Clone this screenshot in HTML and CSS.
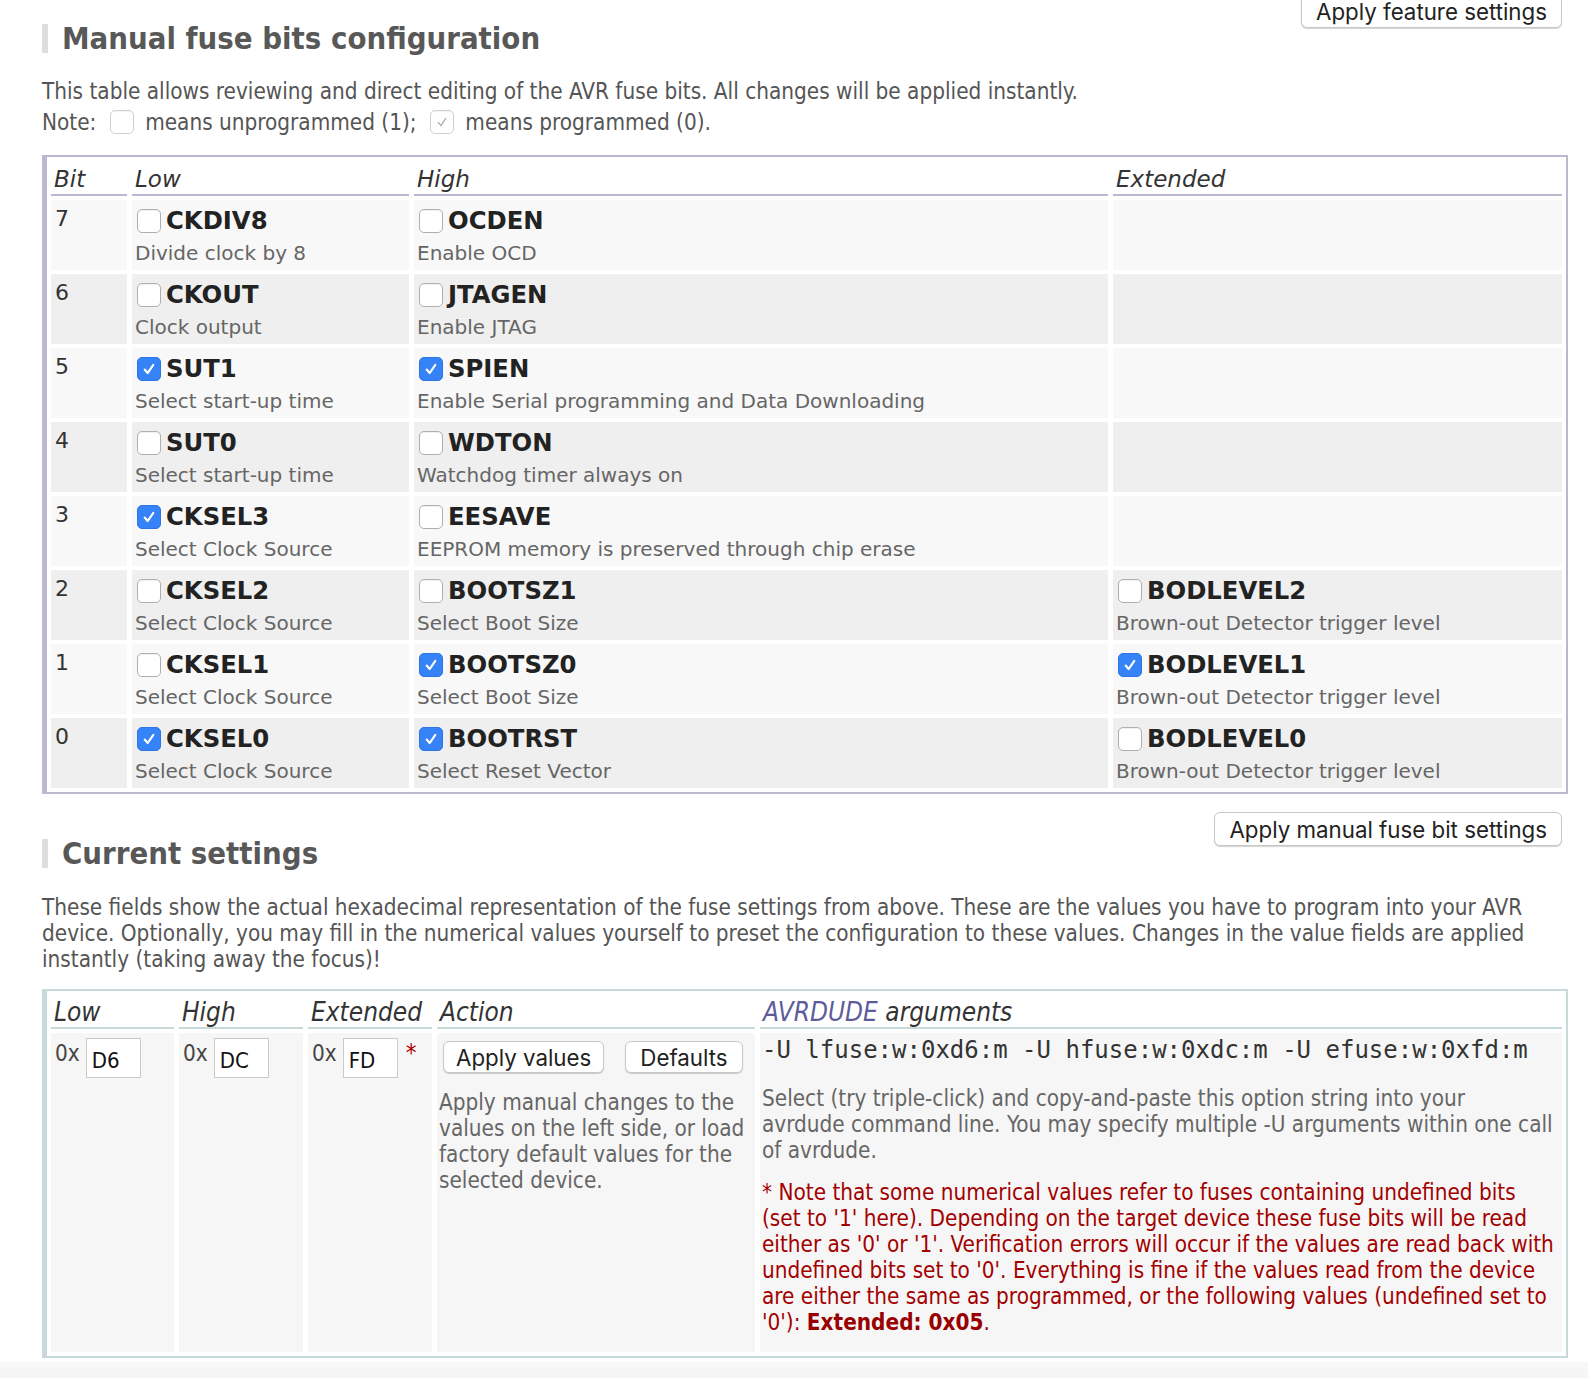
FILE: index.html
```html
<!DOCTYPE html>
<html lang="en">
<head>
<meta charset="utf-8">
<title>AVR Fuse Calculator</title>
<link rel="stylesheet" href="styles.css">
</head>
<body>
<div class="page">

  <div class="head-row first">
    <h2 class="title">Manual fuse bits configuration</h2>
    <button class="btn" type="button">Apply feature settings</button>
  </div>

  <p class="intro">This table allows reviewing and direct editing of the AVR fuse bits. All changes will be applied instantly.<br>Note: <span class="cb note"></span> means unprogrammed (1); <span class="cb note"><svg viewBox="0 0 24 24"><path d="M8 12.5 L10.8 16 L16 8" /></svg></span> means programmed (0).</p>

  <div class="fuse-grid">
    <div class="th">Bit</div><div class="th">Low</div><div class="th">High</div><div class="th">Extended</div>

    <div class="row">
      <div class="bit">7</div>
      <div class="cell"><div class="name"><span class="cb"></span>CKDIV8</div><div class="desc">Divide clock by 8</div></div>
      <div class="cell"><div class="name"><span class="cb"></span>OCDEN</div><div class="desc">Enable OCD</div></div>
      <div class="cell"></div>
    </div>
    <div class="row alt">
      <div class="bit">6</div>
      <div class="cell"><div class="name"><span class="cb"></span>CKOUT</div><div class="desc">Clock output</div></div>
      <div class="cell"><div class="name"><span class="cb"></span>JTAGEN</div><div class="desc">Enable JTAG</div></div>
      <div class="cell"></div>
    </div>
    <div class="row">
      <div class="bit">5</div>
      <div class="cell"><div class="name"><span class="cb on"><svg viewBox="0 0 24 24"><path d="M7.3 12.6 L10.5 16.4 L16.7 7.6" /></svg></span>SUT1</div><div class="desc">Select start-up time</div></div>
      <div class="cell"><div class="name"><span class="cb on"><svg viewBox="0 0 24 24"><path d="M7.3 12.6 L10.5 16.4 L16.7 7.6" /></svg></span>SPIEN</div><div class="desc">Enable Serial programming and Data Downloading</div></div>
      <div class="cell"></div>
    </div>
    <div class="row alt">
      <div class="bit">4</div>
      <div class="cell"><div class="name"><span class="cb"></span>SUT0</div><div class="desc">Select start-up time</div></div>
      <div class="cell"><div class="name"><span class="cb"></span>WDTON</div><div class="desc">Watchdog timer always on</div></div>
      <div class="cell"></div>
    </div>
    <div class="row">
      <div class="bit">3</div>
      <div class="cell"><div class="name"><span class="cb on"><svg viewBox="0 0 24 24"><path d="M7.3 12.6 L10.5 16.4 L16.7 7.6" /></svg></span>CKSEL3</div><div class="desc">Select Clock Source</div></div>
      <div class="cell"><div class="name"><span class="cb"></span>EESAVE</div><div class="desc">EEPROM memory is preserved through chip erase</div></div>
      <div class="cell"></div>
    </div>
    <div class="row alt">
      <div class="bit">2</div>
      <div class="cell"><div class="name"><span class="cb"></span>CKSEL2</div><div class="desc">Select Clock Source</div></div>
      <div class="cell"><div class="name"><span class="cb"></span>BOOTSZ1</div><div class="desc">Select Boot Size</div></div>
      <div class="cell"><div class="name"><span class="cb"></span>BODLEVEL2</div><div class="desc">Brown-out Detector trigger level</div></div>
    </div>
    <div class="row">
      <div class="bit">1</div>
      <div class="cell"><div class="name"><span class="cb"></span>CKSEL1</div><div class="desc">Select Clock Source</div></div>
      <div class="cell"><div class="name"><span class="cb on"><svg viewBox="0 0 24 24"><path d="M7.3 12.6 L10.5 16.4 L16.7 7.6" /></svg></span>BOOTSZ0</div><div class="desc">Select Boot Size</div></div>
      <div class="cell"><div class="name"><span class="cb on"><svg viewBox="0 0 24 24"><path d="M7.3 12.6 L10.5 16.4 L16.7 7.6" /></svg></span>BODLEVEL1</div><div class="desc">Brown-out Detector trigger level</div></div>
    </div>
    <div class="row alt">
      <div class="bit">0</div>
      <div class="cell"><div class="name"><span class="cb on"><svg viewBox="0 0 24 24"><path d="M7.3 12.6 L10.5 16.4 L16.7 7.6" /></svg></span>CKSEL0</div><div class="desc">Select Clock Source</div></div>
      <div class="cell"><div class="name"><span class="cb on"><svg viewBox="0 0 24 24"><path d="M7.3 12.6 L10.5 16.4 L16.7 7.6" /></svg></span>BOOTRST</div><div class="desc">Select Reset Vector</div></div>
      <div class="cell"><div class="name"><span class="cb"></span>BODLEVEL0</div><div class="desc">Brown-out Detector trigger level</div></div>
    </div>
  </div>

  <div class="head-row second">
    <h2 class="title">Current settings</h2>
    <button class="btn" type="button">Apply manual fuse bit settings</button>
  </div>

  <p class="para">These fields show the actual hexadecimal representation of the fuse settings from above. These are the values you have to program into your AVR device. Optionally, you may fill in the numerical values yourself to preset the configuration to these values. Changes in the value fields are applied instantly (taking away the focus)!</p>

  <div class="value-grid">
    <div class="th2">Low</div><div class="th2">High</div><div class="th2">Extended</div><div class="th2">Action</div><div class="th2"><span class="avr">AVRDUDE</span> arguments</div>

    <div class="vcell hex"><span class="ox">0x</span><input class="hexin" type="text" value="D6"></div>
    <div class="vcell hex"><span class="ox">0x</span><input class="hexin" type="text" value="DC"></div>
    <div class="vcell hex"><span class="ox">0x</span><input class="hexin" type="text" value="FD"><span class="star">*</span></div>
    <div class="vcell action">
      <div class="btns"><button class="btn small tight" type="button">Apply values</button><button class="btn small" type="button">Defaults</button></div>
      <p class="help">Apply manual changes to the values on the left side, or load factory default values for the selected device.</p>
    </div>
    <div class="vcell args">
      <div class="mono">-U lfuse:w:0xd6:m -U hfuse:w:0xdc:m -U efuse:w:0xfd:m</div>
      <p class="help">Select (try triple-click) and copy-and-paste this option string into your<br>avrdude command line. You may specify multiple -U arguments within one call<br>of avrdude.</p>
      <p class="warn">* Note that some numerical values refer to fuses containing undefined bits<br>(set to '1' here). Depending on the target device these fuse bits will be read<br>either as '0' or '1'. Verification errors will occur if the values are read back with<br>undefined bits set to '0'. Everything is fine if the values read from the device<br>are either the same as programmed, or the following values (undefined set to<br>'0'): <b>Extended: 0x05</b>.</p>
    </div>
  </div>
</div>
<div class="footer"></div>
</body>
</html>
```

FILE: styles.css
```css
* { box-sizing: border-box; }
html, body { margin: 0; padding: 0; background: #fff; }
body {
  font-family: "DejaVu Sans Condensed", "DejaVu Sans", sans-serif;
  font-stretch: condensed;
  font-size: 22.35px;
  color: #555;
}
.page { padding: 0 20px 0 42px; margin-top: -6px; }

.head-row { display: flex; justify-content: space-between; align-items: flex-start; }
.head-row.second { margin-top: 18px; }
.title {
  margin: 30px 0 0;
  border-left: 6px solid #dedede;
  padding-left: 14px;
  font-size: 30.8px;
  line-height: 29px;
  font-weight: bold;
  color: #585858;
}
.head-row.second .title { margin-top: 27px; }

.btn {
  font-family: Inter, "Liberation Sans", sans-serif;
  font-stretch: normal;
  font-size: 22.3px;
  color: #222;
  background: #fff;
  border: 1px solid #c8c8c8;
  border-radius: 6px;
  box-shadow: 0 1px 1px rgba(0,0,0,0.18);
  height: 34px;
  padding: 0 14px;
  margin: 0 6px 0 0;
}
.btn.small { height: 32px; margin: 0; }
.btn.tight { padding: 0 12px; }

.intro { margin: 23px 0 0; line-height: 31px; }
.para { margin: 26px 0 0; line-height: 26px; }

.cb {
  display: inline-block;
  width: 24px;
  height: 24px;
  border: 1px solid #afafaf;
  border-radius: 5px;
  background: #fff;
  box-shadow: inset 0 1px 1px rgba(0,0,0,0.06);
  vertical-align: middle;
  flex: none;
}
.cb svg { display: block; width: 100%; height: 100%; fill: none; stroke: #fff; stroke-width: 2.3; stroke-linecap: round; stroke-linejoin: round; }
.cb.on { background: #3583f7; border-color: #2c74e8; box-shadow: none; }
.cb.note { border-color: #d0d0d0; margin: -4px 5px 0 7px; }
.cb.note svg { stroke: #a8a8a8; stroke-width: 1.3; }

.fuse-grid {
  margin-top: 17px;
  display: grid;
  grid-template-columns: 76px 277px 694px 1fr;
  column-gap: 5px;
  row-gap: 4px;
  padding: 4px;
  border: 2px solid #b9b9d2;
  border-left-width: 5px;
  font-family: "DejaVu Sans", sans-serif;
  font-stretch: normal;
  font-size: 20px;
}
.th {
  font-style: italic;
  font-size: 23px;
  line-height: 30px;
  padding: 3px 3px 0;
  border-bottom: 2px solid #b9b9d2;
  color: #333;
}
.row { display: contents; }
.row > div { background: #f8f8f8; height: 70px; }
.row.alt > div { background: #efefef; }
.bit { padding: 4px 4px 0; font-size: 22px; line-height: 30px; color: #333; }
.cell { padding: 3px 3px 0; }
.name {
  display: flex;
  align-items: center;
  height: 34px;
  font-weight: bold;
  font-size: 24.3px;
  color: #222;
}
.name .cb { margin: 2px 5px 0 2px; }
.desc { line-height: 32px; color: #666; white-space: nowrap; }

.value-grid {
  margin-top: 17px;
  display: grid;
  grid-template-columns: 123px 124px 124px 318px 1fr;
  grid-template-rows: auto 319px;
  column-gap: 5px;
  row-gap: 4px;
  padding: 4px;
  border: 2px solid #c8d9d9;
  border-left-width: 5px;
}
.th2 {
  font-style: italic;
  font-size: 26px;
  line-height: 30px;
  padding: 2px 3px 0;
  border-bottom: 2px solid #c8d9d9;
  color: #333;
  white-space: nowrap;
}
.avr { color: #5c5c9a; }
.vcell { background: #f6f6f6; }
.hex { display: flex; align-items: flex-start; padding: 5px 4px 0; }
.ox { line-height: 30px; color: #444; }
.hexin {
  width: 55px;
  height: 40px;
  margin-left: 6px;
  border: 1px solid #cacaca;
  background: #fff;
  padding: 4px 5px 0;
  font-family: "DejaVu Sans Condensed", "DejaVu Sans", sans-serif;
  font-stretch: condensed;
  font-size: 22px;
  color: #111;
}
.star { color: #b30000; margin-left: 8px; line-height: 30px; font-size: 24px; }
.action { padding: 8px 2px 0; }
.btns { display: flex; gap: 21px; padding-left: 4px; }
.help { margin: 0; line-height: 26px; color: #666; }
.action .help { margin-top: 16px; }
.args { padding: 2px 2px 0; }
.args p { white-space: nowrap; }
.mono {
  font-family: "DejaVu Sans Mono", monospace;
  font-stretch: normal;
  font-size: 24px;
  line-height: 30px;
  color: #333;
  white-space: nowrap;
}
.args .help { margin-top: 20px; }
.warn { margin: 16px 0 0; line-height: 26px; color: #a30000; }
.warn b { color: #900; }

.footer { margin-top: 4px; height: 40px; background: linear-gradient(#f8f8f8, #efefef); }
```
